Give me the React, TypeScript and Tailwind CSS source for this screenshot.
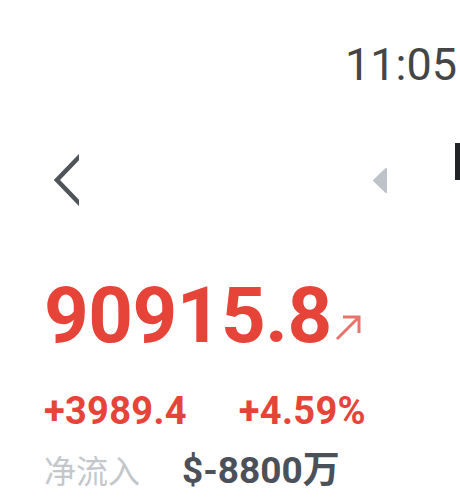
export default function App() {
    return (
        <div className="w-[460px] h-[498px] bg-white overflow-hidden font-['Roboto','Noto_Sans_CJK_SC',sans-serif]">
            {/* STATUS */}
            <div className="mt-[42px] flex justify-end pr-[3px]">
                <span className="text-[45px] leading-[45px] text-[#454545]">11:05</span>
            </div>

            {/* HEADER */}
            <div className="mt-[45px] h-[96px] flex items-center justify-between">
                <svg width="25" height="52" viewBox="0 0 25 52" className="ml-[54px]">
                    <path d="M28 0 L3 26 L28 52" fill="none" stroke="#50555c" strokeWidth="4.5" strokeLinejoin="miter" />
                </svg>
                <div className="flex items-center">
                    <svg width="16" height="27" viewBox="0 0 16 27">
                        <path d="M14 2 L2 13.5 L14 25 Z" fill="#bdc3c9" stroke="#bdc3c9" strokeWidth="2" strokeLinejoin="round" />
                    </svg>
                    <div className="ml-[67px] w-[5px] h-[37px] mb-[37px] bg-[#222326]" />
                </div>
            </div>

            {/* PRICE */}
            <div className="pl-[44px]">
                <div className="mt-[48px] flex items-start">
                    <span className="text-[78px] leading-[79px] font-bold tracking-[-0.5px] text-[#e64339]">90915.8</span>
                    <svg width="27" height="27" viewBox="0 0 27 27" className="ml-[3px] mt-[38px]">
                        <path d="M2 25 L24 3 M8 3 H24 V19" fill="none" stroke="#e9736c" strokeWidth="3" />
                    </svg>
                </div>

                <div className="mt-[37px] flex text-[38px] leading-[39px] font-bold tracking-[0.3px] text-[#e64339]">
                    <span>+3989.4</span>
                    <span className="ml-[52px]">+4.59%</span>
                </div>

                <div className="mt-[22px] flex items-baseline text-[37px] leading-[36px]">
                    <span className="text-[32px] text-[#c3c7cc]">净流入</span>
                    <span className="ml-[42px] font-bold text-[#4b5059]">$-8800万</span>
                </div>
            </div>
        </div>
    );
}
